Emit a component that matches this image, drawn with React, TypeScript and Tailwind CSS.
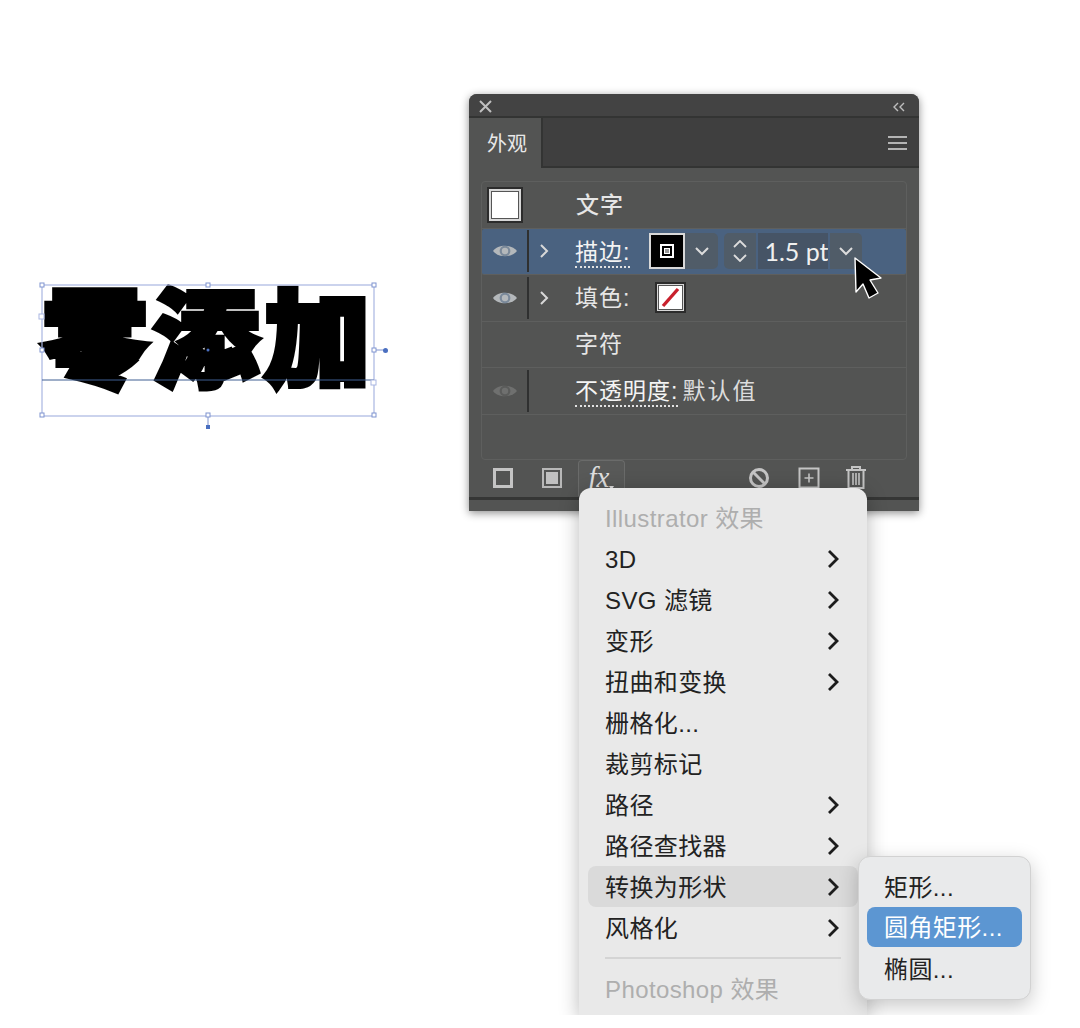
import React from "react";

const CJK = "font-['Liberation_Sans','Noto_Sans_CJK_SC',sans-serif]";

function Eye({ dim }: { dim?: boolean }) {
  const c = dim ? "#6f706f" : "#b4b8bb";
  return (
    <svg width="26" height="16" viewBox="0 0 26 16">
      <path d="M1 8 C6 1 20 1 25 8 C20 15 6 15 1 8 Z" fill={c} />
      <circle cx="13" cy="8" r="5.4" fill={dim ? "#535453" : "#4a6280"} opacity={dim ? 0.7 : 0.55} />
      <circle cx="13" cy="8" r="3.2" fill={c} />
    </svg>
  );
}

function Chevron({ color = "#d8d8d8" }: { color?: string }) {
  return (
    <svg width="10" height="16" viewBox="0 0 10 16">
      <path d="M2 2 L8 8 L2 14" fill="none" stroke={color} strokeWidth="2" />
    </svg>
  );
}

function Down({ color = "#dcdcdc" }: { color?: string }) {
  return (
    <svg width="16" height="10" viewBox="0 0 16 10">
      <path d="M2 2 L8 8 L14 2" fill="none" stroke={color} strokeWidth="2" />
    </svg>
  );
}

function Row({
  eye,
  dim,
  chevron,
  active,
  children,
  last,
}: {
  eye?: boolean;
  dim?: boolean;
  chevron?: boolean;
  active?: boolean;
  last?: boolean;
  children: React.ReactNode;
}) {
  return (
    <div
      className={`flex h-[46.5px] items-center ${active ? "bg-[#4a6280] rounded-[2px]" : ""} ${
        last ? "" : "border-b border-[#5e5f5e]"
      }`}
    >
      <div className="flex h-full w-[45px] items-center justify-center">{eye && <Eye dim={dim} />}</div>
      <div className={`h-[42px] w-[2px] ${eye ? "bg-[#2f3030]" : ""}`} />
      <div className="flex w-[46px] items-center pl-[10px]">{chevron && <Chevron />}</div>
      {children}
    </div>
  );
}

function Label({ children }: { children: React.ReactNode }) {
  return <span className="text-[23px] leading-[30px] tracking-[1px] text-[#e6e6e6]">{children}</span>;
}

function DottedLabel({ children }: { children: React.ReactNode }) {
  return (
    <span className="mt-[3px] border-b-2 border-dotted border-[#e2e2e2] text-[23px] leading-[28px] tracking-[1px] text-[#f4f4f4]">
      {children}
    </span>
  );
}

function StrokeControls() {
  return (
    <div className="ml-[19px] flex h-[36px] items-center">
      <div className="flex h-[36px] w-[36px] items-center justify-center border-2 border-[#d8d8d8] bg-black">
        <div className="flex h-[14px] w-[14px] items-center justify-center border-2 border-white">
          <div className="h-[6px] w-[6px] border border-white bg-[#999]" />
        </div>
      </div>
      <div className="flex h-[36px] w-[33px] items-center justify-center rounded-r-[5px] bg-[#505c68]">
        <Down />
      </div>
      <div className="ml-[6px] flex h-[36px] w-[32px] flex-col items-center justify-center gap-[6px] rounded-l-[5px] bg-[#505c68]">
        <svg width="14" height="8" viewBox="0 0 14 8">
          <path d="M1 7 L7 1 L13 7" fill="none" stroke="#dcdcdc" strokeWidth="1.8" />
        </svg>
        <svg width="14" height="8" viewBox="0 0 14 8">
          <path d="M1 1 L7 7 L13 1" fill="none" stroke="#dcdcdc" strokeWidth="1.8" />
        </svg>
      </div>
      <div className="ml-[2px] flex h-[36px] w-[70px] items-center overflow-hidden bg-[#465466] pl-[6px] text-[25px] text-[#f0f0f0]">
        <span className="whitespace-nowrap font-['Lato',sans-serif]">1.5 pt</span>
      </div>
      <div className="ml-[2px] flex h-[36px] w-[32px] items-center justify-center rounded-r-[5px] bg-[#505c68]">
        <Down />
      </div>
    </div>
  );
}

function Footer() {
  return (
    <div className="flex h-[36px] items-end pl-[24px]">
      <div className="mb-[8px] h-[20px] w-[20px] border-[3px] border-[#c4c4c4]" />
      <div className="mb-[8px] ml-[29px] flex h-[20px] w-[20px] items-center justify-center border-2 border-[#b8b8b8]">
        <div className="h-[12px] w-[12px] bg-[#c0c0c0]" />
      </div>
      <div className="ml-[16px] flex h-[36px] w-[47px] items-start justify-center rounded-t-[4px] border border-b-0 border-[#6a6b6a] bg-[#585958] pt-[1px]">
        <span className="font-['Liberation_Serif',serif] text-[29px] leading-[30px] italic text-[#dedede]">fx</span>
        <svg className="mt-[24px]" width="5" height="4" viewBox="0 0 5 4">
          <path d="M0 0 H5 L2.500 4 Z" fill="#dedede" />
        </svg>
      </div>
      <svg className="mb-[7px] ml-[123px]" width="22" height="22" viewBox="0 0 22 22">
        <circle cx="11" cy="11" r="8.5" fill="none" stroke="#c4c4c4" strokeWidth="3" />
        <path d="M5 5 L17 17" stroke="#c4c4c4" strokeWidth="3" />
      </svg>
      <svg className="mb-[7px] ml-[28px]" width="22" height="22" viewBox="0 0 22 22">
        <rect x="1.5" y="1.5" width="19" height="19" fill="none" stroke="#c4c4c4" strokeWidth="2" />
        <path d="M11 6.5 V15.5 M6.5 11 H15.5" stroke="#c4c4c4" strokeWidth="1.6" />
      </svg>
      <svg className="mb-[7px] ml-[25px]" width="22" height="24" viewBox="0 0 22 24">
        <path d="M1 5 H21 M7 5 V2 H15 V5" fill="none" stroke="#c4c4c4" strokeWidth="2" />
        <path d="M3.5 5 V23 H18.5 V5" fill="none" stroke="#c4c4c4" strokeWidth="2" />
        <path d="M8 8 V20 M11 8 V20 M14 8 V20" stroke="#c4c4c4" strokeWidth="1.6" />
      </svg>
    </div>
  );
}

function AppearancePanel() {
  return (
    <div className="absolute left-[469px] top-[94px] flex h-[417px] w-[450px] flex-col overflow-hidden rounded-t-[8px] bg-[#535453] shadow-[0_2px_8px_rgba(0,0,0,0.45)]">
      <div className="flex h-[24px] items-center justify-between border-b-2 border-[#333433] bg-[#434343] pl-[10px] pr-[13px] pt-[3px]">
        <svg width="13" height="13" viewBox="0 0 13 13">
          <path d="M1 1 L12 12 M12 1 L1 12" stroke="#c0c0c0" strokeWidth="2" />
        </svg>
        <svg width="14" height="10" viewBox="0 0 14 10">
          <path d="M6 1 L2 5 L6 9 M12 1 L8 5 L12 9" fill="none" stroke="#bdbdbd" strokeWidth="1.4" />
        </svg>
      </div>
      <div className="flex h-[50px] items-stretch bg-[#3f3f3f]">
        <div className="flex w-[74px] items-center justify-center border-r-2 border-[#333433] bg-[#535453] pl-[4px] pt-[2px] text-[20px] text-[#e8e8e8]">
          外观
        </div>
        <div className="flex flex-1 items-center justify-end border-b-2 border-[#333433] pr-[12px] pt-[2px]">
          <div className="flex flex-col gap-[4px]">
            <div className="h-[2px] w-[19px] bg-[#b4b4b4]" />
            <div className="h-[2px] w-[19px] bg-[#b4b4b4]" />
            <div className="h-[2px] w-[19px] bg-[#b4b4b4]" />
          </div>
        </div>
      </div>
      <div className="mx-[12px] mt-[13px] h-[279px] rounded-[4px] border border-[#5e5f5e]">
        <div className="flex h-[46.5px] items-center border-b border-[#5e5f5e]">
          <div className="ml-[5px] flex h-[36px] w-[36px] items-center justify-center border-2 border-[#2c2c2c] bg-[#d8d8d8]">
            <div className="h-[28px] w-[28px] border border-[#555] bg-white" />
          </div>
          <span className="ml-[53px] text-[23px] leading-[30px] tracking-[1px] font-medium text-[#e6e6e6]">文字</span>
        </div>
        <Row eye chevron active>
          <DottedLabel>描边:</DottedLabel>
          <StrokeControls />
        </Row>
        <Row eye chevron>
          <Label>填色:</Label>
          <div className="ml-[25px] flex h-[31px] w-[31px] items-center justify-center border-2 border-[#2c2c2c] bg-[#d8d8d8]">
            <div className="h-[25px] w-[25px] border border-[#555] bg-white">
              <svg width="23" height="23" viewBox="0 0 23 23">
                <path d="M4 20 L19 3" stroke="#c8202c" strokeWidth="3.4" />
              </svg>
            </div>
          </div>
        </Row>
        <Row>
          <Label>字符</Label>
        </Row>
        <Row eye dim>
          <DottedLabel>不透明度:</DottedLabel>
          <span className="ml-[4px] text-[23px] leading-[30px] tracking-[2px] text-[#dcdcdc]">默认值</span>
        </Row>
      </div>
      <Footer />
      <div className="mt-[1px] h-[14px] border-t-[3px] border-[#353635] bg-[#535453]" />
    </div>
  );
}

const menuItems: { label: string; sub?: boolean; hot?: boolean }[] = [
  { label: "3D", sub: true },
  { label: "SVG 滤镜", sub: true },
  { label: "变形", sub: true },
  { label: "扭曲和变换", sub: true },
  { label: "栅格化..." },
  { label: "裁剪标记" },
  { label: "路径", sub: true },
  { label: "路径查找器", sub: true },
  { label: "转换为形状", sub: true, hot: true },
  { label: "风格化", sub: true },
];

function MenuChevron() {
  return (
    <svg width="12" height="20" viewBox="0 0 12 20">
      <path d="M2 2 L10 10 L2 18" fill="none" stroke="#1c1c1c" strokeWidth="2.8" />
    </svg>
  );
}

function EffectsMenu() {
  return (
    <div className="absolute left-[579px] top-[488px] w-[288px] rounded-t-[12px] bg-[#e9e9e9] pt-[10px] shadow-[0_4px_20px_rgba(0,0,0,0.28)]">
      <div className="flex h-[40px] items-center pl-[26px] pt-[2px] text-[24px] tracking-[0.4px] text-[#aeaeae]">
        Illustrator 效果
      </div>
      {menuItems.map((m) => (
        <div
          key={m.label}
          className={`mx-[9px] flex h-[41px] items-center justify-between rounded-[8px] pl-[17px] pr-[19px] text-[24px] tracking-[0.4px] text-[#222222] ${
            m.hot ? "bg-[#dadada]" : ""
          }`}
        >
          <span className="pt-[2px]">{m.label}</span>
          {m.sub && <MenuChevron />}
        </div>
      ))}
      <div className="mx-[26px] mb-[10px] mt-[9px] h-[2px] bg-[#d4d4d4]" />
      <div className="flex h-[41px] items-center pl-[26px] text-[24px] tracking-[0.4px] text-[#aeaeae]">Photoshop 效果</div>
      <div className="h-[6px]" />
    </div>
  );
}

function ShapeSubmenu() {
  return (
    <div className="absolute left-[858px] top-[856px] flex w-[173px] flex-col rounded-[12px] border border-[#d2d2d2] bg-[#e9eaeb] px-[8px] py-[9px] shadow-[0_6px_20px_rgba(0,0,0,0.22)]">
      <div className="flex h-[41px] items-center pl-[17px] pt-[2px] text-[24px] tracking-[0.4px] text-[#222222]">矩形...</div>
      <div className="flex h-[40px] items-center rounded-[8px] bg-[#5c96d2] pl-[17px] pt-[2px] text-[24px] tracking-[0.4px] whitespace-nowrap text-white">
        圆角矩形...
      </div>
      <div className="flex h-[43px] items-center pl-[17px] pt-[2px] text-[24px] tracking-[0.4px] text-[#222222]">椭圆...</div>
    </div>
  );
}

function SelectedHeadline() {
  const handles = [
    [42, 285],
    [208, 285],
    [374, 285],
    [42, 350],
    [374, 350],
    [42, 415],
    [208, 415],
    [374, 415],
  ];
  return (
    <div className="absolute left-0 top-0 h-[450px] w-[420px]">
      <div className="absolute left-[42px] top-[273px] text-[106px] leading-[136px] font-black tracking-[5px] whitespace-nowrap text-black [-webkit-text-stroke:6px_#000]">
        零添加
      </div>
      <svg className="absolute left-0 top-0" width="420" height="450" viewBox="0 0 420 450">
        <rect x="42" y="285" width="332" height="131" fill="none" stroke="#a9b6e2" strokeWidth="1.2" />
        <path d="M42 380 H374" stroke="#3f5f92" strokeWidth="1" />
        <path d="M374 350 H385 M208 416 V427" stroke="#7f93cf" strokeWidth="1" />
        {handles.map(([x, y]) => (
          <rect key={`${x}-${y}`} x={x - 2} y={y - 2} width="4" height="4" fill="#fff" stroke="#7f93cf" strokeWidth="1" />
        ))}
        <rect x="39" y="314" width="5" height="5" fill="#fff" stroke="#a9b6e2" />
        <rect x="371" y="380" width="5" height="5" fill="#fff" stroke="#a9b6e2" />
        <circle cx="385.500" cy="350.500" r="2.500" fill="#4a6fc0" />
        <circle cx="208" cy="350" r="1.500" fill="#4a6fc0" />
        <rect x="206" y="425" width="4" height="4" fill="#4a6fc0" />
      </svg>
    </div>
  );
}

export default function App() {
  return (
    <div className={`relative h-[1028px] w-[1080px] overflow-hidden bg-white ${CJK}`}>
      <div className="relative h-[1015px] w-[1080px] overflow-hidden bg-white">
        <SelectedHeadline />
        <AppearancePanel />
        <EffectsMenu />
        <ShapeSubmenu />
        <svg className="absolute left-[853px] top-[256px]" width="32" height="44" viewBox="0 0 32 44">
          <path
            d="M2 2 L3 36 L10 28 L16 42 L25 37 L17 24 L28 22 Z"
            fill="#000"
            stroke="#fff"
            strokeWidth="1.4"
            strokeLinejoin="round"
          />
        </svg>
      </div>
    </div>
  );
}
